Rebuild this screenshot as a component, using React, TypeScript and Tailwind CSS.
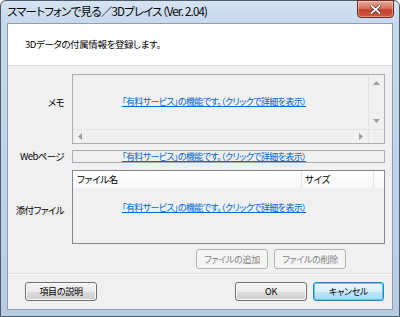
import React from "react";

const font = "font-['Meiryo_UI','Noto_Sans_CJK_JP',sans-serif] [font-feature-settings:'palt']";

function Link() {
  return (
    <span className="cursor-pointer whitespace-nowrap text-[9px] leading-none tracking-[-0.6px] text-[#0066cc] underline">
      「有料サービス」の機能です。（クリックで詳細を表示）
    </span>
  );
}

function Btn({
  children,
  w,
  disabled,
  focused,
}: {
  children: React.ReactNode;
  w: string;
  disabled?: boolean;
  focused?: boolean;
}) {
  const base = "flex items-center justify-center rounded-[3px] border text-[9px] leading-none tracking-[-0.3px]";
  if (disabled)
    return (
      <div className={`${base} ${w} border-[#adb2b5] bg-[#f4f4f4] text-[#838383]`}>{children}</div>
    );
  if (focused)
    return (
      <div
        className={`${base} ${w} border-[#3c7fb1] bg-[linear-gradient(#eaf6fd_0%,#d9f0fc_50%,#bee6fd_51%,#a7d9f5_100%)] text-black shadow-[inset_0_0_0_1px_#48d1fb]`}
      >
        {children}
      </div>
    );
  return (
    <div
      className={`${base} ${w} border-[#707070] bg-[linear-gradient(#f2f2f2_0%,#ebebeb_50%,#dddddd_51%,#cfcfcf_100%)] text-black shadow-[inset_0_0_0_1px_#fcfcfc]`}
    >
      {children}
    </div>
  );
}

function Arrow({ dir }: { dir: "up" | "down" | "left" | "right" }) {
  const pts = {
    up: "0,4 3.5,0 7,4",
    down: "0,0 3.5,4 7,0",
    left: "4,0 0,3.5 4,7",
    right: "0,0 4,3.5 0,7",
  }[dir];
  const vert = dir === "up" || dir === "down";
  return (
    <svg width={vert ? 7 : 4} height={vert ? 4 : 7} viewBox={vert ? "0 0 7 4" : "0 0 4 7"}>
      <polygon points={pts} fill="#a0a0a0" />
    </svg>
  );
}

export default function App() {
  return (
    <div className={`h-[317px] w-[400px] overflow-hidden ${font} text-black`}>
      <div className="relative flex h-full w-full flex-col rounded-t-[6px] border border-[#4f5a67] bg-[linear-gradient(#d6e3f2_0%,#c8d9ed_20px,#c0d2e8_60%,#b9cce4_100%)] px-[6px] pb-[6px]">
        {/* title bar */}
        <div className="flex h-[22px] shrink-0 items-center">
          <span className="text-[11.5px] leading-none tracking-[-0.8px] text-black">
            スマートフォンで見る／3Dプレイス（Ver. 2.04)
          </span>
        </div>
        <div className="absolute right-[5px] top-[-1px] flex h-[18px] w-[37px] items-center justify-center rounded-b-[4px] border border-[#6d2b25] bg-[linear-gradient(#e9a99c_0%,#d7745f_45%,#c4412a_55%,#d0573f_100%)] shadow-[inset_0_0_0_1px_rgba(255,255,255,0.35)]">
          <svg width="11" height="9" viewBox="0 0 11 9">
            <path d="M1.5 1 L9.5 8 M9.5 1 L1.5 8" stroke="#3b2b2b" strokeWidth="3.2" strokeLinecap="square" />
            <path d="M1.5 1 L9.5 8 M9.5 1 L1.5 8" stroke="#ffffff" strokeWidth="1.8" strokeLinecap="square" />
          </svg>
        </div>

        {/* client area */}
        <div className="flex flex-1 flex-col border border-[#8e9fb4] bg-[#f0f0f0]">
          <div className="flex h-[42px] shrink-0 items-center border-b border-[#dfdfdf] bg-white pl-[17px]">
            <span className="text-[9.5px] leading-none tracking-[-0.4px]">3Dデータの付属情報を登録します。</span>
          </div>

          <div className="grid grid-cols-[64px_1fr] gap-y-[6px] pr-[7px] pt-[8px] text-[9.5px] tracking-[-0.6px]">
            {/* memo */}
            <div className="flex items-center justify-end pb-[12px] pr-[8px] leading-none">メモ</div>
            <div className="flex h-[70px] flex-col border border-[#abadb3] bg-[#f0f0f0]">
              <div className="flex flex-1">
                <div className="flex flex-1 items-center pb-[2px] pl-[49px]">
                  <Link />
                </div>
                <div className="flex w-[16px] flex-col items-center justify-between border-l border-[#e4e4e4] bg-[#f0f0f0] py-[6px]">
                  <Arrow dir="up" />
                  <Arrow dir="down" />
                </div>
              </div>
              <div className="flex h-[14px]">
                <div className="flex flex-1 items-center justify-between border-t border-[#e4e4e4] px-[5px]">
                  <Arrow dir="left" />
                  <Arrow dir="right" />
                </div>
                <div className="w-[16px] border-l border-t border-[#e4e4e4]" />
              </div>
            </div>

            {/* web */}
            <div className="flex items-center justify-end pr-[8px] leading-none">Webページ</div>
            <div className="flex h-[13px] items-center border border-[#abadb3] bg-[#f0f0f0] pl-[49px]">
              <Link />
            </div>

            {/* files */}
            <div className="flex items-center justify-end pr-[8px] pt-[8px] leading-none">添付ファイル</div>
            <div className="mt-[1px] flex h-[74px] flex-col border border-[#828790] bg-[#f0f0f0] tracking-[-0.3px]">
              <div className="flex h-[17px] shrink-0 items-center bg-[linear-gradient(#ffffff,#f7f8f9)] leading-none">
                <div className="flex h-full w-[229px] items-center border-r border-[#e3e4e6] pl-[4px]">ファイル名</div>
                <div className="flex h-full flex-1 items-center border-r border-[#e3e4e6] pl-[3px]">サイズ</div>
                <div className="w-[10px]" />
              </div>
              <div className="flex flex-1 items-center pb-[16px] pl-[49px]">
                <Link />
              </div>
            </div>
          </div>

          <div className="flex justify-end gap-[6px] pr-[46px] pt-[5px]">
            <Btn w="w-[72px] h-[20px]" disabled>
              ファイルの追加
            </Btn>
            <Btn w="w-[72px] h-[20px]" disabled>
              ファイルの削除
            </Btn>
          </div>

          <div className="mt-[4px] border-t border-[#d5dfe5] shadow-[0_1px_0_#ffffff]" />

          <div className="flex items-start pl-[17px] pr-[8px] pt-[8px]">
            <Btn w="w-[72px] h-[19px]">項目の説明</Btn>
            <div className="flex-1" />
            <Btn w="w-[72px] h-[19px]">OK</Btn>
            <div className="w-[6px]" />
            <Btn w="w-[71px] h-[19px]" focused>
              キャンセル
            </Btn>
          </div>
        </div>
      </div>
    </div>
  );
}
